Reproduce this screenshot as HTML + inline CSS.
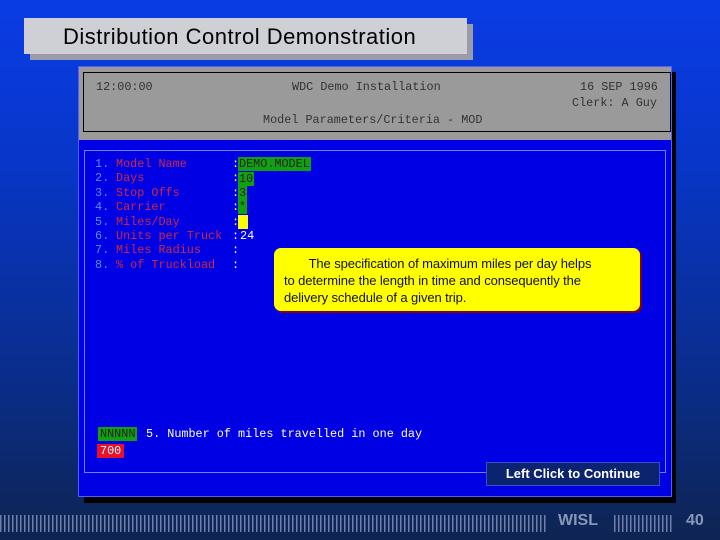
<!DOCTYPE html>
<html><head><style>
*{margin:0;padding:0;box-sizing:border-box}
body{width:720px;height:540px;overflow:hidden;position:relative;font-family:"Liberation Sans",sans-serif;
background:linear-gradient(180deg,#0a3ce6 0%,#0836c8 30%,#0a2d8a 70%,#0e2452 100%);}
.a{position:absolute}
.m{font-family:"Liberation Mono",monospace;font-size:11.8px;white-space:pre;line-height:14px}
</style></head><body>
<div class="a" style="left:30px;top:24px;width:443px;height:36px;background:#9a9aa8"></div>
<div class="a" style="left:24px;top:18px;width:443px;height:36px;background:#cfcfd6;font-size:22px;line-height:38px;padding-left:39px;color:#000;letter-spacing:0.5px">Distribution Control Demonstration</div>

<div class="a" style="left:84px;top:72px;width:592px;height:431px;background:#000"></div>
<div class="a" style="left:78px;top:66px;width:594px;height:431px;background:#0000e4;border:1px solid #5060ff"></div>
<div class="a" style="left:79px;top:67px;width:592px;height:73px;background:#9a9a9a"></div>
<div class="a" style="left:83px;top:72px;width:588px;height:60px;border:1px solid #000"></div>
<div class="a m" style="left:96px;top:80px;color:#333">12:00:00</div>
<div class="a m" style="left:292px;top:80px;color:#333">WDC Demo Installation</div>
<div class="a m" style="left:580px;top:80px;color:#333">16 SEP 1996</div>
<div class="a m" style="left:572px;top:96px;color:#333">Clerk: A Guy</div>
<div class="a m" style="left:263px;top:113px;color:#333">Model Parameters/Criteria - MOD</div>

<div class="a" style="left:84px;top:150px;width:582px;height:323px;border:1px solid #7080ff"></div>

<div class="a m" style="left:95px;top:157px;line-height:14.4px;color:#5a8cff">1.
2.
3.
4.
5.
6.
7.
8.</div>
<div class="a m" style="left:116px;top:157px;line-height:14.4px;color:#d02840">Model Name
Days
Stop Offs
Carrier
Miles/Day
Units per Truck
Miles Radius
% of Truckload</div>
<div class="a m" style="left:232px;top:157px;line-height:14.4px;color:#fff">:
:
:
:
:
:
:
:</div>
<div class="a m" style="left:238px;top:157px;background:#10a010;color:#222;padding:0 1px">DEMO.MODEL</div>
<div class="a m" style="left:238px;top:172px;background:#10a010;color:#222;padding:0 1px">10</div>
<div class="a m" style="left:238px;top:186px;background:#10a010;color:#222;padding:0 1px">3</div>
<div class="a m" style="left:238px;top:200px;background:#10a010;color:#222;padding:0 1px">*</div>
<div class="a" style="left:238px;top:215px;width:10px;height:14px;background:#ffff00"></div>
<div class="a m" style="left:240px;top:229px;color:#fff">24</div>

<div class="a" style="left:276px;top:250px;width:366px;height:63px;background:#800018;border-radius:7px"></div>
<div class="a" style="left:274px;top:248px;width:366px;height:63px;background:#ffff00;border-radius:7px;font-size:13px;line-height:17px;color:#111;padding:7px 6px 0 10px;letter-spacing:-0.1px">&nbsp;&nbsp;&nbsp;&nbsp;&nbsp;&nbsp;&nbsp;The specification of maximum miles per day helps<br>to determine the length in time and consequently the<br>delivery schedule of a given trip.</div>

<div class="a m" style="left:98px;top:427px;background:#10a010;color:#222;padding:0 2px">NNNNN</div>
<div class="a m" style="left:146px;top:427px;color:#fff">5. Number of miles travelled in one day</div>
<div class="a m" style="left:97px;top:444px;background:#e8102a;color:#fff;padding:0 3px">700</div>

<div class="a" style="left:486px;top:462px;width:174px;height:24px;background:#0c2470;border:1px solid #3050d0;color:#fff;font-weight:bold;font-size:13px;line-height:22px;text-align:center">Left Click to Continue</div>

<div class="a" style="left:0;top:515px;width:548px;height:17px;background:repeating-linear-gradient(90deg,#7080a8 0 1.5px,transparent 1.5px 4px)"></div>
<div class="a" style="left:558px;top:512px;color:#8a96b8;font-weight:bold;font-size:16px">WISL</div>
<div class="a" style="left:614px;top:515px;width:60px;height:17px;background:repeating-linear-gradient(90deg,#7080a8 0 1.5px,transparent 1.5px 4px)"></div>
<div class="a" style="left:686px;top:512px;color:#8a96b8;font-weight:bold;font-size:16px">40</div>
</body></html>
